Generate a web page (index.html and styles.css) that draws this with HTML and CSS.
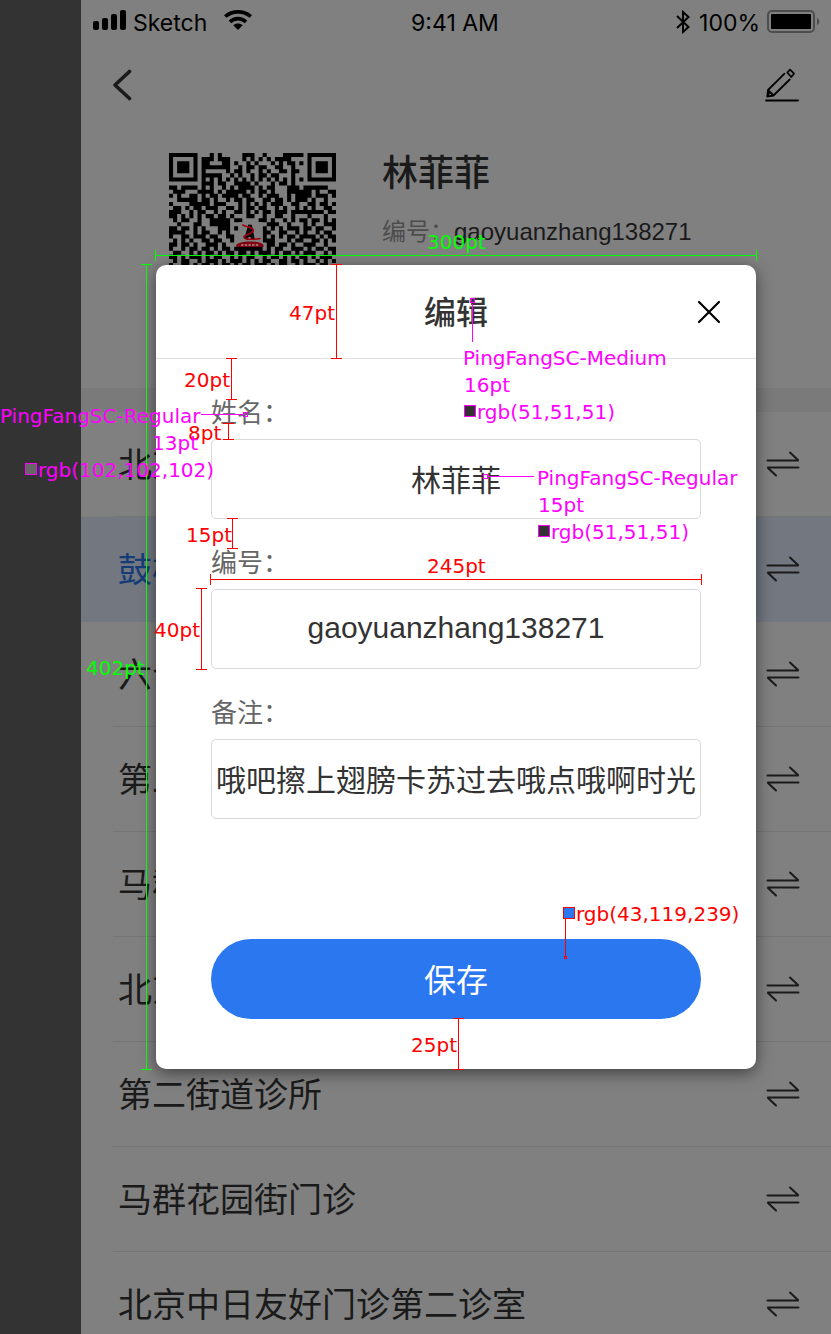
FILE: index.html
```html
<!DOCTYPE html>
<html lang="zh-CN">
<head>
<meta charset="utf-8">
<title>编辑</title>
<link rel="stylesheet" href="styles.css">
</head>
<body>
<svg class="defs" aria-hidden="true">
  <symbol id="swap" viewBox="0 0 34 26">
    <path d="M1.500 9.500H32.500L24 1.500M32.500 16.500H1.500L10 24.500" fill="none" stroke="currentColor" stroke-width="2" stroke-linecap="round" stroke-linejoin="bevel"/>
  </symbol>
</svg>
<main class="phone">
  <header class="status">
    <div class="status-side">
      <svg class="signal" viewBox="0 0 33 20"><rect y="11" width="6" height="9" rx="2"/><rect x="9" y="8" width="6" height="12" rx="2"/><rect x="18" y="4" width="6" height="16" rx="2"/><rect x="27" width="6" height="20" rx="2"/></svg>
      <span>Sketch</span>
      <svg class="wifi" viewBox="0 0 28 20"><path d="M1.200 6.500C8.500 .3 19.500 .3 26.800 6.500M6 11.900c4.500-4.400 11.500-4.400 16 0" fill="none" stroke="#000" stroke-width="3.600"/><path d="M9.300 15.300c2.600-2.500 6.800-2.500 9.400 0L14 20z"/></svg>
    </div>
    <time>9:41 AM</time>
    <div class="status-side status-right">
      <svg class="bluetooth" viewBox="0 0 14 24"><path d="M1 6 12.500 17 7 22V2l5.500 5L1 18" fill="none" stroke="#000" stroke-width="2"/></svg>
      <span>100%</span>
      <svg class="battery" viewBox="0 0 54 24"><rect x="1" y="1" width="46" height="21" rx="4" fill="none" stroke="#4d4d4d" stroke-width="2"/><rect x="4" y="4" width="40" height="15" rx="1"/><path d="M50 8c3 1 3 6 0 7z" fill="#4d4d4d"/></svg>
    </div>
  </header>
  <nav class="nav">
    <button class="icon-button" type="button" aria-label="返回"><svg class="back" viewBox="0 0 20 32"><path d="M17.500 2.500 3 16l14.500 13.500" fill="none" stroke="#1a1a1a" stroke-width="3.600" stroke-linecap="round" stroke-linejoin="round"/></svg></button>
    <button class="icon-button" type="button" aria-label="修改"><svg class="pencil" viewBox="0 0 34 34" fill="none" stroke="#000" stroke-width="1.800" stroke-linecap="round" stroke-linejoin="round"><path d="M1 32.500h32M2.300 28.500 3 22 19.500 5.600M8.500 27.500 2.300 28.500M8.500 27.500 24.700 11.500M3 22l5.500 5.500M22.300 4.500 25 1.700l4 4-2.700 3.300zM3 22c1.500 1.500 1.500 3 0 5"/></svg></button>
  </nav>
  <section class="profile">
    <svg class="qr" viewBox="0 0 41 41" role="img" aria-label="二维码"><path id="qr-modules"/><rect x="17" y="17" width="6" height="6" fill="#808080"/><path d="M18.900 21.200 19.900 17.700 20.600 21.200M19.200 20.200h1.600" fill="none" stroke="#0a0a0a" stroke-width=".9"/><path d="M18 17.600c1 .6 3.200.8 2.600 1.600s-2.600 1-2.100 1.600 2.500.4 4 .2" fill="none" stroke="#a00010" stroke-width=".4"/><path d="M16.500 23.100v-.5c.6-1.200 6.100-1.200 6.700 0v.5z" fill="#800010"/><path d="M17.700 22.600h4.400" stroke="#a06a6a" stroke-width=".5" stroke-dasharray=".6 .3"/></svg>
    <div class="person">
      <h1 class="name">林菲菲</h1>
      <p class="number"><span class="muted">编号：</span>gaoyuanzhang138271</p>
    </div>
  </section>
  <ul class="list">
    <li class="row"><span class="row-text">北京中日友好门诊</span><svg class="swap"><use href="#swap"/></svg></li>
    <li class="row active"><span class="row-text">鼓楼街道诊所</span><svg class="swap"><use href="#swap"/></svg></li>
    <li class="row"><span class="row-text">六合街道诊所</span><svg class="swap"><use href="#swap"/></svg></li>
    <li class="row"><span class="row-text">第二街道诊所</span><svg class="swap"><use href="#swap"/></svg></li>
    <li class="row"><span class="row-text">马群花园街门诊</span><svg class="swap"><use href="#swap"/></svg></li>
    <li class="row"><span class="row-text">北京中日友好门诊</span><svg class="swap"><use href="#swap"/></svg></li>
    <li class="row"><span class="row-text">第二街道诊所</span><svg class="swap"><use href="#swap"/></svg></li>
    <li class="row"><span class="row-text">马群花园街门诊</span><svg class="swap"><use href="#swap"/></svg></li>
    <li class="row"><span class="row-text">北京中日友好门诊第二诊室</span><svg class="swap"><use href="#swap"/></svg></li>
  </ul>
  <div class="overlay">
    <form class="modal">
      <div class="modal-head">
        <h2 class="modal-title">编辑</h2>
        <button class="close" type="button" aria-label="关闭"><svg viewBox="0 0 24 24"><path d="M2 2l20 20M22 2 2 22" fill="none" stroke="#000" stroke-width="2.200" stroke-linecap="round"/></svg></button>
      </div>
      <div class="modal-body">
        <div class="field"><label for="name">姓名：</label><input id="name" value="林菲菲"></div>
        <div class="field"><label for="number">编号：</label><input id="number" value="gaoyuanzhang138271"></div>
        <div class="field"><label for="note">备注：</label><input id="note" value="哦吧擦上翅膀卡苏过去哦点哦啊时光"></div>
        <button class="save" type="submit">保存</button>
      </div>
      <svg class="specs" viewBox="0 0 831 1334">
        <g class="green">
          <path d="M155.500 255.500H756.500M155.500 250v11M756.500 250v11M146.500 264.500V1069.500M141 264.500h11M141 1069.500h11"/>
          <text x="427" y="249">300pt</text><text x="86" y="675">402pt</text>
        </g>
        <g class="red">
          <path d="M336.500 264.500V358.500M331 264.500h11M331 358.500h11M231.500 358.500V399.500M226 358.500h11M226 399.500h11M228.500 423.500V439.500M223 423.500h11M223 439.500h11M232.500 518.500V548.500M227 518.500h11M227 548.500h11M210.500 579.500H701.500M210.500 574v11M701.500 574v11M201.500 588.500V669.500M196 588.500h11M196 669.500h11M458.500 1018.500V1069.500M453 1018.500h11M453 1069.500h11"/>
          <text x="289" y="320">47pt</text><text x="184" y="387">20pt</text><text x="188" y="440">8pt</text><text x="186" y="542">15pt</text><text x="427" y="573">245pt</text><text x="154" y="637">40pt</text><text x="411" y="1052">25pt</text>
          <text x="576" y="921">rgb(43,119,239)</text>
          <path d="M565.500 918V957"/><rect x="564.500" y="956.500" width="2" height="2"/><rect class="blue-chip" x="563.500" y="907.500" width="11" height="11"/>
        </g>
        <g class="magenta">
          <path d="M472.500 304V342M488 476.500H534M201 414.500H243"/>
          <rect x="470.500" y="298.500" width="4" height="4"/><rect x="483.500" y="474.500" width="4" height="4"/><rect x="243.500" y="412.500" width="4" height="4"/>
          <rect class="dark-chip" x="464.500" y="405.500" width="11" height="11"/><rect class="dark-chip" x="538.500" y="525.500" width="11" height="11"/><rect class="gray-chip" x="25.500" y="463.500" width="11" height="11"/>
          <text x="463" y="365">PingFangSC-Medium</text><text x="464" y="392">16pt</text><text x="477" y="419">rgb(51,51,51)</text>
          <text x="537" y="485">PingFangSC-Regular</text><text x="538" y="512">15pt</text><text x="551" y="539">rgb(51,51,51)</text>
          <text x="0" y="423">PingFangSC-Regular</text><text x="152" y="450">13pt</text><text x="38" y="477">rgb(102,102,102)</text>
        </g>
      </svg>
    </form>
  </div>
</main>
<script src="qr.js"></script>
</body>
</html>
```

FILE: styles.css
```css
* { box-sizing: border-box; }
body {
  margin: 0;
  padding-left: 81px;
  background: #333;
  color: #1a1a1a;
  font-family: "Noto Sans CJK SC", sans-serif;
}
h1, h2, p, ul { margin: 0; padding: 0; font-weight: 400; }
button { padding: 0; border: 0; background: none; font: inherit; }
svg { display: block; flex: none; }
.defs { position: absolute; width: 0; height: 0; }
.phone {
  position: relative;
  display: flex;
  flex-direction: column;
  height: 100vh;
  background: #808080;
}
.status, .nav, .profile { flex: none; }
.status {
  display: grid;
  grid-template-columns: 1fr auto 1fr;
  align-items: center;
  height: 40px;
  padding: 2px 10px 0 12px;
  color: #000;
  font: 23px/38px Inter, sans-serif;
}
.status time { margin-right: 4px; padding-top: 2px; }
.status span { padding-top: 2px; }
.status-side { display: flex; align-items: center; }
.status-right { justify-content: flex-end; }
.signal { width: 33px; height: 20px; margin: 0 7px 4px 0; }
.wifi { width: 28px; height: 20px; margin: 0 0 4px 17px; }
.bluetooth { width: 14px; height: 24px; margin-right: 9px; }
.battery { width: 54px; height: 24px; margin-left: 7px; }
.nav {
  display: flex;
  justify-content: space-between;
  align-items: center;
  height: 90px;
  padding: 0 32px 0 31px;
}
.icon-button { display: block; }
.back { width: 20px; height: 32px; }
.pencil { width: 34px; height: 34px; }
.profile {
  display: flex;
  gap: 46px;
  height: 258px;
  padding: 23px 32px 0 88px;
}
.qr { width: 167px; height: 167px; }
.name { font-size: 36px; line-height: 34px; font-weight: 500; }
.number {
  margin-top: 28px;
  font: 24px/34px "Liberation Sans", "Noto Sans CJK SC", sans-serif;
}
.muted { color: #4d4d4d; }
.list {
  flex: 1;
  min-height: 0;
  overflow: hidden;
  list-style: none;
  border-top: 24px solid #7a7a7a;
}
.row {
  position: relative;
  display: flex;
  justify-content: space-between;
  align-items: center;
  height: 105px;
  padding: 0 31px 2px 37px;
}
.row::after {
  content: "";
  position: absolute;
  inset: auto 0 0 32px;
  height: 1px;
  background: #757575;
}
.active { background: #727780; color: #163c78; }
.active::after { display: none; }
.row-text { padding-bottom: 2px; font-size: 34px; line-height: 48px; }
.swap { width: 34px; height: 26px; color: #1a1a1a; }
.overlay {
  position: absolute;
  inset: 0;
  display: grid;
  place-items: center;
}
.modal {
  position: relative;
  width: 80%;
  border-radius: 10px;
  background: #fff;
  box-shadow: 0 4px 16px rgba(0, 0, 0, .5);
}
.modal-head {
  display: flex;
  justify-content: center;
  align-items: center;
  height: 94px;
  padding-bottom: 4px;
  border-bottom: 1px solid #e0e0e0;
}
.modal-title { color: #333; font-size: 32px; line-height: 44px; font-weight: 500; }
.close { position: absolute; top: 35px; right: 35px; width: 24px; height: 24px; }
.modal-body {
  display: flex;
  flex-direction: column;
  gap: 30px;
  padding: 40px 55px 50px;
}
.field { display: grid; gap: 16px; }
.field label { justify-self: start; color: #666; font-size: 26px; line-height: 24px; }
.field input {
  width: 100%;
  height: 80px;
  padding: 0 0 2px;
  border: 1px solid #d8d8d8;
  border-radius: 5px;
  background: #fff;
  color: #333;
  font: 30px "Liberation Sans", "Noto Sans CJK SC", sans-serif;
  text-align: center;
}
.save {
  height: 80px;
  margin-top: 90px;
  padding-bottom: 2px;
  border-radius: 40px;
  background: #2b77ef;
  color: #fff;
  font-size: 32px;
}
.specs {
  position: absolute;
  top: -265px;
  left: -156px;
  width: 831px;
  height: 1334px;
  pointer-events: none;
}
.specs path, .specs rect { fill: none; stroke-width: 1px; shape-rendering: crispEdges; }
.specs text { stroke: none; font: 20px "DejaVu Sans", sans-serif; }
.green { stroke: #0f0; fill: #0f0; }
.red { stroke: #f00; fill: #f00; }
.magenta { stroke: #f0f; fill: #f0f; }
.specs .blue-chip { fill: #2b77ef; }
.specs .dark-chip { fill: #333; }
.specs .gray-chip { fill: #666; }
```

FILE: qr.js
```js
const rows = [
  "#######...#.#.....###..#....#####.#######",
  "#.....#.###.###...#.#.#.#.####....#.....#",
  "#.###.#.##...##.#..#.#...#.#.##.#.#.###.#",
  "#.###.#.#######..#.##.##..##..#...#.###.#",
  "#.###.#.#.....#.##.#..#.#..##.##..#.###.#",
  "#.....#.#####..#.#..#.##.##...#...#.....#",
  "#######.#.#.#.#.#.#.#.#.#.#.#.#.#.#######",
  "........###.##..####.#...#.##.#..........",
  "##.####.#.#..#.#.####.#.##...###.######..",
  ".###...####.#.#####.#.##.#...######.#..##",
  "#.#..##.#.##.####.##..#.###..#.####.###.#",
  "..#####.##.#..#.##.##..##.##.#.###.#..#..",
  "#....#####.###...#.#.#.#.###..##..##.##.#",
  ".##.#.##.###..##.#.##.##..#.#..#.#.#..##.",
  "###..#.##..#.#..##.#.#.##.###.########.##",
  "##.#.#.#.##.##.#...##..#..##..#...#...#..",
  ".#.##..#..#####.##....##.#..#.#.##.##.#.#",
  "..#...##..#####.........###..#...#.#..###",
  "##.##.#.#...###.#......#.#.#.###.##.##..#",
  "####..#.##..#.#........##..##..#.#..#.##.",
  "#..##.###.##..##.......#.#.#.##.####.#.##",
  ".#.#.#..##.##..#.......###...#.##..##.#.#",
  "##.##.#..###.#..........##.##.#..###..#..",
  "#..#.##.##.#.##.#######.#.##..###.#.##.##",
  ".##..#.#.##.#.##.##.#.###.#.##.#.###..#.#",
  "##.#.###.#.##..#.#.##..#.##.#.#.##.#.###.",
  ".#.##..#.###.#.###.#.#.##..##.##.#..#.#.#",
  "#..##.#.##.#.##.#.##.###.#.##..#.###.##..",
  ".#.#.##..##.#.##.###.#..##.#.##.#.#.##.##"
];
let d = "";
rows.forEach((row, y) => {
  for (const run of row.matchAll(/#+/g)) {
    const w = run[0].length;
    d += `M${run.index} ${y}h${w}v1h-${w}z`;
  }
});
document.getElementById("qr-modules").setAttribute("d", d);
```
